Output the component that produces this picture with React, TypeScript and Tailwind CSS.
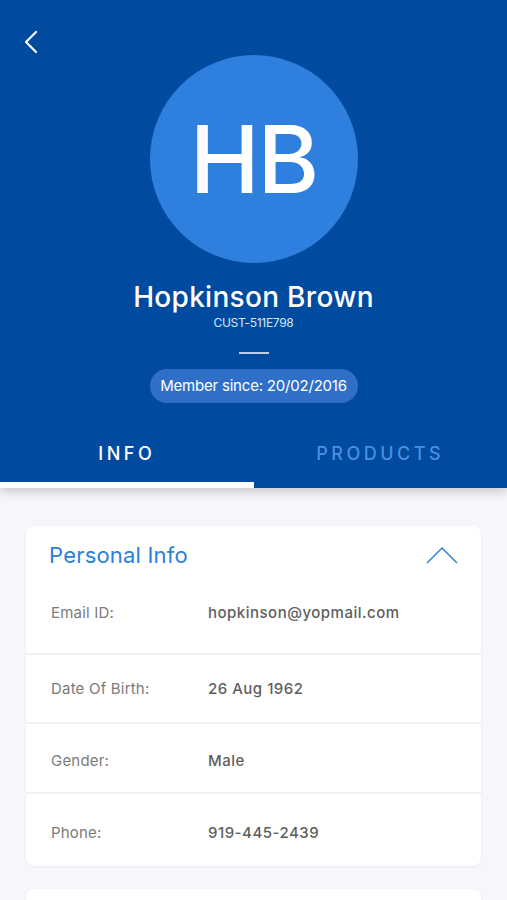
import { useState } from "react";

const rows = [
  { label: "Date Of Birth:", value: "26 Aug 1962", h: "h-[69px]", pt: "pt-0" },
  { label: "Gender:", value: "Male", h: "h-[70px]", pt: "pt-[5px]" },
  { label: "Phone:", value: "919-445-2439", h: "h-[74px]", pt: "pt-[6px]" },
];

export default function App() {
  const [tab, setTab] = useState<"info" | "products">("info");
  const [open, setOpen] = useState(true);

  return (
    <div
      className="min-h-[900px] bg-[#f5f7fb]"
      style={{ fontFamily: "Inter, 'Noto Sans', sans-serif" }}
    >
      <header className="bg-[#004a9f] shadow-[0_4px_10px_rgba(0,0,0,0.18)]">
        <div className="flex h-[55px] items-start px-[22px] pt-[30px]">
          <button type="button" aria-label="Back" className="text-white">
            <svg width="18" height="24" viewBox="0 0 18 24" fill="none">
              <polyline
                points="14,2 4,12 14,22"
                stroke="currentColor"
                strokeWidth="2.2"
                strokeLinecap="round"
                strokeLinejoin="round"
              />
            </svg>
          </button>
        </div>
        <div className="flex flex-col items-center">
          <div className="flex h-[208px] w-[208px] items-center justify-center rounded-full bg-[#2f7fdf]">
            <span className="text-[94px] leading-none font-medium tracking-[-2px] text-white">HB</span>
          </div>
          <h1 className="mt-[16px] text-[28px] leading-[36px] font-medium tracking-[0.3px] text-white">
            Hopkinson Brown
          </h1>
          <p className="text-[12px] leading-[16px] text-[#dbe6f5] tracking-[-0.3px]">CUST-511E798</p>
          <div className="mt-[21px] h-[2px] w-[30px] bg-[#b9cdeb]" />
          <div className="mt-[15px] flex h-[34px] w-[208px] items-center justify-center rounded-full bg-[#2f6fc8] text-[15px] tracking-[-0.2px] text-white">
            Member since: 20/02/2016
          </div>
        </div>
        <div className="mt-[22px] grid grid-cols-2">
          {(["info", "products"] as const).map((t) => (
            <button
              key={t}
              type="button"
              onClick={() => setTab(t)}
              className="flex flex-col"
            >
              <span
                className={`flex h-[57px] items-center justify-center text-[18px] font-medium tracking-[3.5px] ${
                  tab === t ? "text-white" : "text-[#4a90e2]"
                }`}
              >
                {t.toUpperCase()}
              </span>
              <span className={`h-[6px] ${tab === t ? "bg-white" : "bg-transparent"}`} />
            </button>
          ))}
        </div>
      </header>

      <main className="px-[26px] pt-[38px]">
        <section className="rounded-[8px] bg-white pt-[14px] shadow-[0_1px_3px_rgba(0,0,0,0.06)]">
          <div className="flex h-[30px] items-center justify-between px-[23px]">
            <h2 className="text-[22px] tracking-[0.2px] text-[#2b80dc]">Personal Info</h2>
            <button type="button" onClick={() => setOpen(!open)} aria-label="Toggle">
              <svg width="32" height="18" viewBox="0 0 32 18" fill="none">
                <polyline
                  points={open ? "1,17 16,2 31,17" : "1,1 16,16 31,1"}
                  stroke="#3182df"
                  strokeWidth="1.5"
                />
              </svg>
            </button>
          </div>
          {open && (
            <>
              <div className="flex items-center px-[25px] pt-[31px] pb-[28px] text-[15px] leading-[24px]">
                <span className="w-[157px] tracking-[0.2px] text-[#7b7b7b]">Email ID:</span>
                <span className="font-medium tracking-[0.5px] text-[#5e5e5e]">hopkinson@yopmail.com</span>
              </div>
              {rows.map((r) => (
                <div
                  key={r.label}
                  className={`flex items-center border-t-2 border-[#f0f0f2] px-[25px] text-[15px] leading-[24px] ${r.h} ${r.pt}`}
                >
                  <span className="w-[157px] tracking-[0.2px] text-[#7b7b7b]">{r.label}</span>
                  <span className="font-medium tracking-[0.5px] text-[#5e5e5e]">{r.value}</span>
                </div>
              ))}
            </>
          )}
        </section>
        <section className="mt-[23px] h-[60px] rounded-[8px] bg-white shadow-[0_1px_3px_rgba(0,0,0,0.06)]" />
      </main>
    </div>
  );
}
